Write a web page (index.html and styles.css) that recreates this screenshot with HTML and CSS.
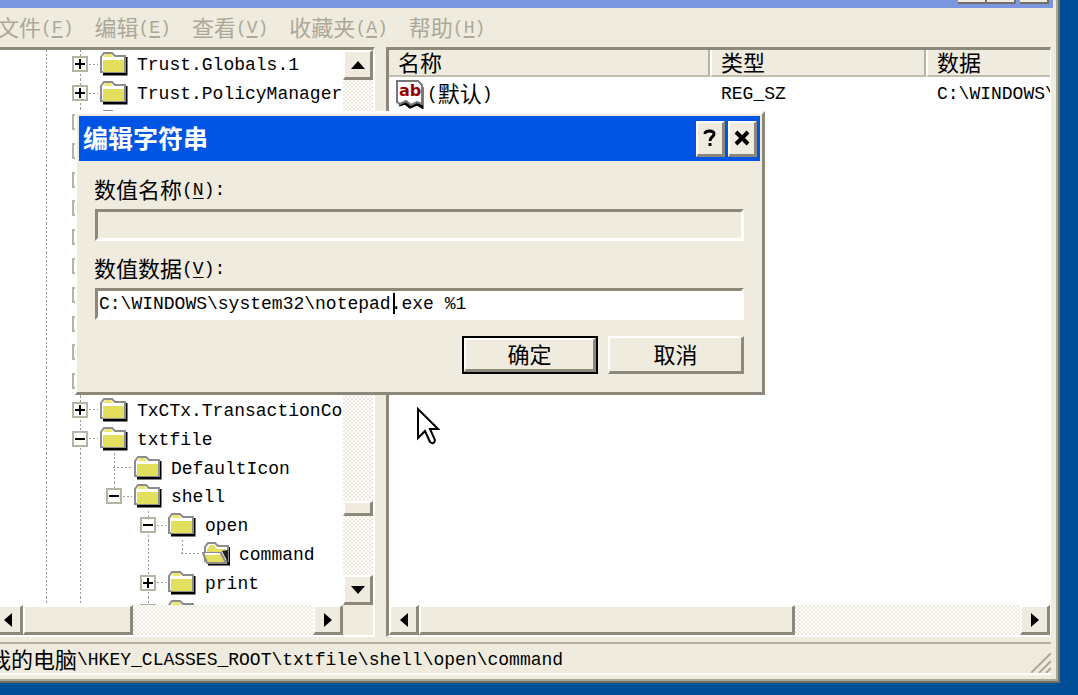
FILE: index.html
```
<!DOCTYPE html>
<html lang="zh-CN">
<head>
<meta charset="utf-8">
<title>注册表编辑器</title>
<link rel="stylesheet" href="styles.css">
<script src="tree.js" defer></script>
</head>
<body>
<svg class="defs" aria-hidden="true">
  <defs>
    <pattern id="dither" width="4" height="4" patternUnits="userSpaceOnUse">
      <rect width="4" height="4" fill="#e8e43c"/>
      <rect width="2" height="2" fill="#deda80"/>
      <rect x="2" y="2" width="2" height="2" fill="#deda80"/>
    </pattern>
    <symbol id="folder" viewBox="0 0 28 26">
      <path d="M3 23H26V6" fill="none" stroke="#000" stroke-width="3"/>
      <path d="M1 21V6L4 2H12L15 5H25V21Z" fill="#fff" stroke="#8c8c8c" stroke-width="2"/>
      <path d="M4 6L5 3H11L13 6Z" fill="#ece86a"/>
      <path d="M3 9H24V21H3Z" fill="url(#dither)"/>
    </symbol>
    <symbol id="folder-open" viewBox="0 0 28 26">
      <path d="M6 23H27V6" fill="none" stroke="#000" stroke-width="3"/>
      <path d="M3 20V6L6 2H13L16 5H26V20Z" fill="#fff" stroke="#8c8c8c" stroke-width="2"/>
      <path d="M5 9L8 4H12L15 8H24V11H5Z" fill="url(#dither)"/>
      <path d="M1 12H19L24 22H5Z" fill="url(#dither)" stroke="#8c8c8c" stroke-width="2"/>
      <path d="M3 13H18" stroke="#fff" stroke-width="2"/>
      <path d="M20 10L26 22V9Z" fill="#222"/>
    </symbol>
  </defs>
</svg>
<main class="window">
  <header class="titlebar">
    <button class="cap" aria-label="最小化"></button><button class="cap" aria-label="最大化"></button><button class="cap cap-close" aria-label="关闭"></button>
  </header>
  <nav class="menu">
    <button disabled><span class="zh">文件</span>(<u>F</u>)</button>
    <button disabled><span class="zh">编辑</span>(<u>E</u>)</button>
    <button disabled><span class="zh">查看</span>(<u>V</u>)</button>
    <button disabled><span class="zh">收藏夹</span>(<u>A</u>)</button>
    <button disabled><span class="zh">帮助</span>(<u>H</u>)</button>
  </nav>
  <div class="panes">
    <section class="pane tree-pane">
      <div class="tree-view"><ul class="tree" id="tree"></ul></div>
      <div class="vscroll">
        <button class="sb" aria-label="向上"><svg width="14" height="8"><path d="M7 0L14 8H0Z"/></svg></button>
        <div class="vthumb"></div>
        <button class="sb" aria-label="向下"><svg width="14" height="8"><path d="M0 0H14L7 8Z"/></svg></button>
      </div>
      <div class="hscroll hscroll-tree">
        <button class="sb" aria-label="向左"><svg width="8" height="14"><path d="M8 0V14L0 7Z"/></svg></button>
        <div class="hthumb"></div>
        <button class="sb" aria-label="向右"><svg width="8" height="14"><path d="M0 0V14L8 7Z"/></svg></button>
      </div>
    </section>
    <section class="pane list-pane">
      <div class="list-view">
        <table>
          <colgroup><col class="c-name"><col class="c-type"><col></colgroup>
          <thead><tr><th class="zh">名称</th><th class="zh">类型</th><th class="zh">数据</th></tr></thead>
          <tbody><tr>
            <td class="name-cell"><div class="name"><svg width="30" height="30" viewBox="0 0 30 30"><path d="M4 26L10 24L15 28L22 25L27 28V8" fill="none" stroke="#000" stroke-width="3"/><path d="M2 2H23L27 6V25L22 23L16 26L11 22L5 25L2 23Z" fill="#fff" stroke="#777" stroke-width="2"/><text x="4" y="17" class="ab">ab</text></svg><span>(<span class="zh">默认</span>)</span></div></td>
            <td>REG_SZ</td><td>C:\WINDOWS\</td>
          </tr></tbody>
        </table>
      </div>
      <div class="hscroll hscroll-list">
        <button class="sb" aria-label="向左"><svg width="8" height="14"><path d="M8 0V14L0 7Z"/></svg></button>
        <div class="hthumb"></div>
        <button class="sb" aria-label="向右"><svg width="8" height="14"><path d="M0 0V14L8 7Z"/></svg></button>
      </div>
    </section>
  </div>
  <footer class="status">
    <span class="path"><span class="zh">我的电脑</span>\HKEY_CLASSES_ROOT\txtfile\shell\open\command</span>
    <svg class="grip" width="20" height="20"><path d="M0 20L20 0M8 20L20 8M15 20L20 15" stroke="#aca899" stroke-width="2"/></svg>
  </footer>
</main>

<form class="dialog" role="dialog" aria-labelledby="dlg-title">
  <header class="dlg-title">
    <h1 id="dlg-title">编辑字符串</h1>
    <button type="button" class="dcap" aria-label="帮助"><svg width="16" height="18" viewBox="0 0 16 18"><path d="M3 5C3 1 12 1 12 5C12 8 8 8 8 12M8 14V17" fill="none" stroke="#000" stroke-width="3"/></svg></button>
    <button type="button" class="dcap" aria-label="关闭"><svg width="16" height="16" viewBox="0 0 16 16"><path d="M2 2L14 14M14 2L2 14" stroke="#000" stroke-width="4"/></svg></button>
  </header>
  <div class="dlg-body">
    <label for="vname"><span class="zh">数值名称</span>(<u>N</u>):</label>
    <input id="vname" type="text" readonly>
    <label for="vdata"><span class="zh">数值数据</span>(<u>V</u>):</label>
    <div class="field"><input id="vdata" class="data" type="text" value="C:\WINDOWS\system32\notepad.exe %1"><i class="caret"></i></div>
    <div class="actions">
      <button type="button" class="btn btn-default"><span class="zh">确定</span></button>
      <button type="button" class="btn"><span class="zh">取消</span></button>
    </div>
  </div>
</form>
<svg class="cursor" width="24" height="40" viewBox="0 0 24 40"><path d="M2 2V31L8 25L9 24L14 35Q18 38 19 33L14 22H22Z" fill="#fff" stroke="#000" stroke-width="2"/></svg>
</body>
</html>
```

FILE: styles.css
```
* { box-sizing: border-box; }
body {
  margin: 0;
  height: 100vh;
  padding: 0 18px 12px 0;
  overflow: hidden;
  position: relative;
  background: #004e98;
  color: #000;
  font: 18px/24px "Liberation Mono", "Noto Sans CJK SC", monospace;
}
button, input { font: inherit; color: inherit; margin: 0; padding: 0; border-radius: 0; outline: 0; }
.zh { font-family: "Noto Sans CJK SC", sans-serif; font-size: 22px; line-height: 24px; }
span.zh { padding-bottom: 4px; }
.defs { position: absolute; width: 0; height: 0; }
u { text-underline-offset: 3px; }

.window {
  height: 100%;
  display: flex;
  flex-direction: column;
  background: #efebde;
  border: solid #716f64;
  border-width: 0 2px 2px 0;
  box-shadow: inset -2px -2px #aca899;
  overflow: hidden;
  padding: 0 7px 6px 0;
}
.titlebar {
  height: 8px;
  margin-right: -2px;
  padding-right: 4px;
  display: flex;
  justify-content: flex-end;
  background: #7b96df;
}
.cap { width: 29px; height: 4px; border: solid #716f64; border-width: 0 2px 2px 0; background: #efebde; }
.cap-close { margin-left: 4px; }

.menu { display: flex; gap: 21px; height: 39px; align-items: center; margin-left: -3px; }
.menu button { border: 0; background: none; color: #aca899; white-space: nowrap; display: flex; align-items: center; height: 28px; }
.menu u { text-decoration-thickness: 2px; }

.panes { flex: 1; min-height: 0; display: flex; gap: 11px; }
.pane {
  min-width: 0;
  display: grid;
  border: solid #fff;
  border-top-color: #8c887a;
  border-width: 3px 2px 2px 0;
  background: #fff;
}
.tree-pane { width: 375px; flex: none; grid-template: 1fr 30px / 1fr 30px; background: #efebde; }
.tree-view { background: #fff; overflow: hidden; min-height: 0; }
.list-pane { flex: 1; grid-template: 1fr 30px / 1fr; border-left: 3px solid #8c887a; border-right-width: 1px; }
.list-view { overflow: hidden; min-height: 0; }

.tree { list-style: none; margin: 0; padding: 0; height: 576px; display: grid; grid-template-rows: repeat(20, 1fr); }
.tree li { display: flex; padding-left: 29px; white-space: nowrap; align-items: stretch; min-height: 0; }
.guide, .node { width: 34px; flex: none; display: flex; align-items: center; justify-content: center; }
.line { background: repeating-linear-gradient(#999 0 2px, #fff 2px 4px) center / 1px 100% no-repeat; }
.line-end { background: repeating-linear-gradient(#999 0 2px, #fff 2px 4px) center top / 1px 50% no-repeat; }
.branch::after, .branch-box::after {
  content: "";
  flex: none;
  width: 19px;
  height: 1px;
  margin-left: 17px;
  background: repeating-linear-gradient(90deg, #999 0 2px, #fff 2px 4px);
}
.branch-box { justify-content: flex-start; padding-left: 9px; }
.branch-box::after { width: 9px; margin-left: 1px; }
.box { width: 16px; height: 16px; border: 2px solid #b8b4a4; background: #fff; flex: none; display: block; }
.node svg { width: 28px; height: 26px; display: block; }
.caption { padding: 2px 0 0 6px; align-self: center; }

.vscroll, .hscroll { background: repeating-conic-gradient(#fff 0 25%, #eeeae0 0 50%) 0 0 / 4px 4px; display: flex; }
.vscroll { flex-direction: column; }
.vthumb { height: 15px; margin: auto 0 59px; }
.sb, .vthumb, .hthumb, .dcap, .btn {
  background: #efebde;
  border: 2px solid #fff;
  border-right: 3px solid #8c887a;
  border-bottom: 3px solid #8c887a;
}
.sb { width: 30px; height: 30px; flex: none; display: grid; place-items: center; }
.hscroll-tree { margin-left: -7px; }
.hscroll-tree .hthumb { width: 110px; }
.hscroll-list .hthumb { width: 376px; }
.hscroll .sb:last-child { margin-left: auto; }

table { width: 100%; table-layout: fixed; border-collapse: separate; border-spacing: 0; }
.c-name { width: 321px; }
.c-type { width: 216px; }
th {
  height: 27px;
  padding: 0 0 3px 9px;
  font-weight: 400;
  text-align: left;
  background: #efebde;
  border-bottom: 2px solid #c2beae;
  border-right: 2px solid #b8b4a4;
}
thead .zh { line-height: 22px; }
th:last-child { border-right: 0; }
th + th { border-left: 2px solid #fff; }
td { height: 33px; padding: 0 0 0 11px; overflow: hidden; white-space: nowrap; vertical-align: middle; }
.name-cell { padding-left: 6px; }
.name { display: flex; gap: 2px; align-items: center; }
.name > span { display: flex; align-items: center; }
.ab { font: bold 16px "DejaVu Sans", sans-serif; fill: #900; }

.status {
  height: 33px;
  margin-top: 5px;
  display: flex;
  align-items: center;
  justify-content: space-between;
  border-top: 2px solid #b4b0a0;
  border-bottom: 2px solid #fff;
}
.path { margin-left: -11px; padding-top: 3px; white-space: nowrap; display: flex; align-items: center; }
.grip { align-self: flex-end; }

.dialog {
  position: absolute;
  left: 75px;
  top: 111px;
  width: 690px;
  background: #efebde;
  border: solid #fff;
  border-width: 3px 3px 3px 2px;
  border-right-color: #8c887a;
  border-bottom-color: #8c887a;
  padding: 2px;
}
.dlg-title { height: 45px; background: #0055e5; color: #fff; display: flex; align-items: center; padding: 0 3px 0 4px; gap: 3px; }
.dlg-title h1 { font: bold 25px/30px "Noto Sans CJK SC", sans-serif; margin: 0; padding-bottom: 3px; flex: 1; }
.dcap { width: 29px; height: 36px; display: grid; place-items: center; }
.dlg-body { padding: 16px 16px 16px; display: flex; flex-direction: column; }
.dlg-body label { display: flex; align-items: center; height: 26px; margin: 0 0 6px -1px; }
.dlg-body input {
  width: 100%;
  height: 32px;
  padding: 0 0 0 1px;
  border: solid #fff;
  border-width: 3px;
  border-top-color: #8c887a;
  border-left-color: #8c887a;
  background: #efebde;
}
.dlg-body input.data { background: #fff; }
#vname { margin-bottom: 15px; }
.field { position: relative; }
.caret { position: absolute; left: 298px; top: 5px; width: 2px; height: 21px; background: #000; }
.actions { display: flex; justify-content: flex-end; gap: 10px; margin-top: 16px; }
.btn { width: 136px; height: 38px; display: grid; place-items: center; }
.btn-default { outline: 2px solid #000; outline-offset: -2px; border-width: 4px 5px 5px 4px; }
.cursor { position: absolute; left: 416px; top: 407px; }
```

FILE: tree.js
```
// Rows of the registry tree: guides (l = line, e = line end, b = branch, n = blank), expander, folder, name
const rows = [
  ["l", "+", "folder", "Trust.Globals.1"],
  ["l", "+", "folder", "Trust.PolicyManager"],
  ...Array.from({ length: 10 }, () => ["l", "+", "folder", ""]),
  ["l", "+", "folder", "TxCTx.TransactionCo"],
  ["l", "-", "folder", "txtfile"],
  ["ll", "b", "folder", "DefaultIcon"],
  ["ll", "-", "folder", "shell"],
  ["lln", "-", "folder", "open"],
  ["llnl", "e", "folder-open", "command"],
  ["lln", "+", "folder", "print"],
  ["lln", "+", "folder", "printto"]
];
const guideClass = { l: "guide line", n: "guide", b: "guide line branch", e: "guide line-end branch" };
const mark = {
  "+": '<svg class="box" viewBox="0 0 12 12"><path d="M1 6H11M6 1V11" stroke="#000" stroke-width="2"/></svg>',
  "-": '<svg class="box" viewBox="0 0 12 12"><path d="M1 6H11" stroke="#000" stroke-width="2"/></svg>'
};
document.getElementById("tree").innerHTML = rows.map(([guides, exp, icon, name]) => {
  const cells = [...guides].map(g => `<span class="${guideClass[g]}"></span>`).join("");
  const last = name === "shell" ? "line-end" : "line";
  const cell = mark[exp]
    ? `<span class="guide ${last} branch-box">${mark[exp]}</span>`
    : `<span class="${guideClass[exp]}"></span>`;
  return `<li>${cells}${cell}<span class="node"><svg><use href="#${icon}"/></svg></span><span class="caption">${name}</span></li>`;
}).join("");
```
